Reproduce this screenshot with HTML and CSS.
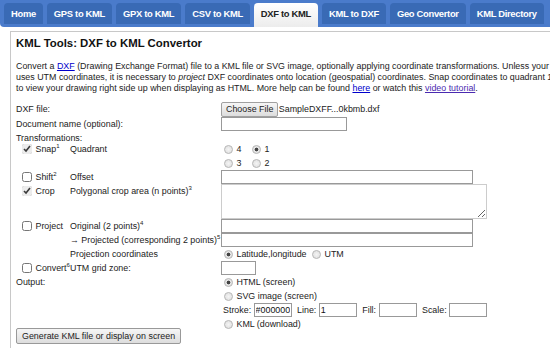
FILE: index.html
```html
<!DOCTYPE html>
<html lang="en">
<head>
  <meta charset="UTF-8" />
  <title>KML Tools: DXF to KML Convertor</title>
  <link rel="stylesheet" href="styles.css">
</head>
<body>
  <ul class="tabs">
    <li><a href="#">Home</a></li>
    <li><a href="#">GPS to KML</a></li>
    <li><a href="#">GPX to KML</a></li>
    <li><a href="#">CSV to KML</a></li>
    <li class="active"><a href="#">DXF to KML</a></li>
    <li><a href="#">KML to DXF</a></li>
    <li><a href="#">Geo Convertor</a></li>
    <li><a href="#">KML Directory</a></li>
  </ul>

  <div class="panel">
    <h1>KML Tools: DXF to KML Convertor</h1>
    <p class="intro">
      Convert a <a href="#">DXF</a> (Drawing Exchange Format) file to a KML file or SVG image, optionally applying coordinate transformations. Unless your DXF file<br>
      uses UTM coordinates, it is necessary to <i>project</i> DXF coordinates onto location (geospatial) coordinates. Snap coordinates to quadrant 1<br>
      to view your drawing right side up when displaying as HTML. More help can be found <a href="#">here</a> or watch this <a href="#" class="visited">video tutorial</a>.
    </p>

    <form id="form-dxf">
      <table class="grid">
        <colgroup>
          <col class="c1"><col class="c2"><col class="c3">
        </colgroup>
        <tr>
          <td colspan="2">DXF file:</td>
          <td><span class="file-btn">Choose File</span> <span class="file-name">SampleDXFF...0kbmb.dxf</span></td>
        </tr>
        <tr>
          <td colspan="2">Document name (optional):</td>
          <td><input type="text" class="txt w-name" /></td>
        </tr>
        <tr>
          <td colspan="3" class="short">Transformations:</td>
        </tr>
        <tr>
          <td class="chk"><label><input type="checkbox" checked /> Snap<sup>1</sup></label></td>
          <td>Quadrant</td>
          <td>
            <div class="quad">
              <label class="opt"><input type="radio" name="q" /> 4</label><label class="opt"><input type="radio" name="q" checked /> 1</label>
            </div>
            <div class="quad">
              <label class="opt"><input type="radio" name="q" /> 3</label><label class="opt"><input type="radio" name="q" /> 2</label>
            </div>
          </td>
        </tr>
        <tr>
          <td class="chk"><label><input type="checkbox" /> Shift<sup>2</sup></label></td>
          <td>Offset</td>
          <td><input type="text" class="txt w-long" /></td>
        </tr>
        <tr>
          <td class="chk"><label><input type="checkbox" checked /> Crop</label></td>
          <td>Polygonal crop area (n points)<sup>3</sup></td>
          <td><textarea class="crop"></textarea></td>
        </tr>
        <tr>
          <td class="chk"><label><input type="checkbox" /> Project</label></td>
          <td>Original (2 points)<sup>4</sup></td>
          <td><input type="text" class="txt w-long" /></td>
        </tr>
        <tr>
          <td></td>
          <td>&rarr; Projected (corresponding 2 points)<sup>5</sup></td>
          <td><input type="text" class="txt w-long" /></td>
        </tr>
        <tr>
          <td></td>
          <td>Projection coordinates</td>
          <td>
            <label><input type="radio" name="pc" checked /> Latitude,longitude</label>
            <label><input type="radio" name="pc" /> UTM</label>
          </td>
        </tr>
        <tr>
          <td class="chk"><label><input type="checkbox" /> Convert<sup>6</sup></label></td>
          <td>UTM grid zone:</td>
          <td><input type="text" class="txt w-zone" /></td>
        </tr>
        <tr>
          <td colspan="2">Output:</td>
          <td>
            <div><label><input type="radio" name="out" checked /> HTML (screen)</label></div>
            <div><label><input type="radio" name="out" /> SVG image (screen)</label></div>
            <div class="svg-opts">
              Stroke: <input type="text" class="txt w-small" value="#000000" />
              <span class="sp">Line:</span> <input type="text" class="txt w-small" value="1" />
              <span class="sp">Fill:</span> <input type="text" class="txt w-small" />
              <span class="sp">Scale:</span> <input type="text" class="txt w-small" />
            </div>
            <div><label><input type="radio" name="out" /> KML (download)</label></div>
          </td>
        </tr>
      </table>
      <button type="submit" class="generate">Generate KML file or display on screen</button>
    </form>
  </div>
</body>
</html>
```

FILE: styles.css
```css
html {
  overflow: hidden;
}

body {
  margin: 0;
  font-family: "Liberation Sans", Arial, sans-serif;
  font-size: 8.9px;
  color: #222;
  background-color: #fff;
}

a {
  color: #0000cc;
}

a.visited {
  color: #4a2ab0;
}

/* tab bar */
.tabs {
  list-style: none;
  margin: 0;
  padding: 3px 0 0 4px;
  height: 24px;
  display: flex;
  gap: 4px;
  background-color: #4a7bcb;
  border-radius: 0 0 4px 4px;
  width: 600px;
}

.tabs li {
  height: 21px;
  background-color: #396ab5;
  border-radius: 4px 4px 0 0;
}

.tabs a {
  display: block;
  padding: 0 7px;
  line-height: 21px;
  font-size: 9.4px;
  font-weight: bold;
  letter-spacing: -0.3px;
  color: #fff;
  text-decoration: none;
}

.tabs li.active {
  height: 24px;
  background: linear-gradient(#ffffff, #ececec);
}

.tabs li.active a {
  color: #222;
}

/* content panel */
.panel {
  margin: 4px 0 0 10px;
  padding: 0 0 8px 5px;
  border-left: 1px solid #c8c8c8;
  border-top: 1px solid #c8c8c8;
  width: 700px;
}

h1 {
  margin: 0;
  padding-top: 4px;
  font-size: 11.4px;
  line-height: 14px;
  font-weight: bold;
  color: #111;
}

.intro {
  margin: 11px 0 0 0;
  line-height: 11px;
  white-space: nowrap;
}

/* form grid */
.grid {
  margin-top: 8px;
  border-collapse: collapse;
  table-layout: fixed;
  width: 500px;
}

.c1 { width: 54px; }
.c2 { width: 151px; }

.grid td {
  padding: 0;
  vertical-align: top;
  line-height: 14px;
  white-space: nowrap;
}

.grid td.short {
  padding-top: 3px;
  line-height: 8px;
}

.chk label {
  padding-left: 6px;
}

sup {
  position: relative;
  top: -4px;
  font-size: 6px;
  line-height: 0;
  vertical-align: baseline;
}

input[type="checkbox"] {
  width: 10px;
  height: 10px;
  margin: 2px 1px 0 0;
  vertical-align: top;
  accent-color: #ececec;
}

input[type="radio"] {
  appearance: none;
  width: 9px;
  height: 9px;
  margin: 3px 1px 0 3px;
  vertical-align: top;
  border: 1px solid #b8b8b8;
  border-radius: 50%;
  background: radial-gradient(circle, #f4f4f4, #dcdcdc);
}

input[type="radio"]:checked {
  background: radial-gradient(circle, #444 0, #444 1.6px, #e8e8e8 2.2px, #d8d8d8 100%);
}

.opt {
  display: inline-block;
  width: 28px;
}

.txt {
  box-sizing: border-box;
  height: 14px;
  margin: 0;
  padding: 0 1px;
  border: 1px solid #999;
  font-family: inherit;
  font-size: 8.9px;
  color: #111;
  vertical-align: top;
}

.w-name { width: 126px; }
.w-long { width: 252px; }
.w-zone { width: 35px; }
.w-small { width: 38px; }

.crop {
  box-sizing: border-box;
  display: block;
  width: 266px;
  height: 35px;
  margin: 0;
  border: 1px solid #ccc;
}

.file-btn {
  display: inline-block;
  box-sizing: border-box;
  height: 15px;
  padding: 0 4px;
  line-height: 13px;
  vertical-align: top;
  border: 1px solid #a0a0a0;
  border-radius: 2px;
  background: linear-gradient(#f6f6f6, #dddddd);
}

.file-name {
  margin-left: -2px;
}

.svg-opts {
  padding-left: 2px;
}

.sp {
  margin-left: 3px;
}

.generate {
  margin-top: -3px;
  height: 16px;
  padding: 0 5px;
  font-family: inherit;
  font-size: 8.9px;
  color: #222;
  border: 1px solid #999;
  border-radius: 2px;
  background: linear-gradient(#f6f6f6, #dddddd);
}
```
